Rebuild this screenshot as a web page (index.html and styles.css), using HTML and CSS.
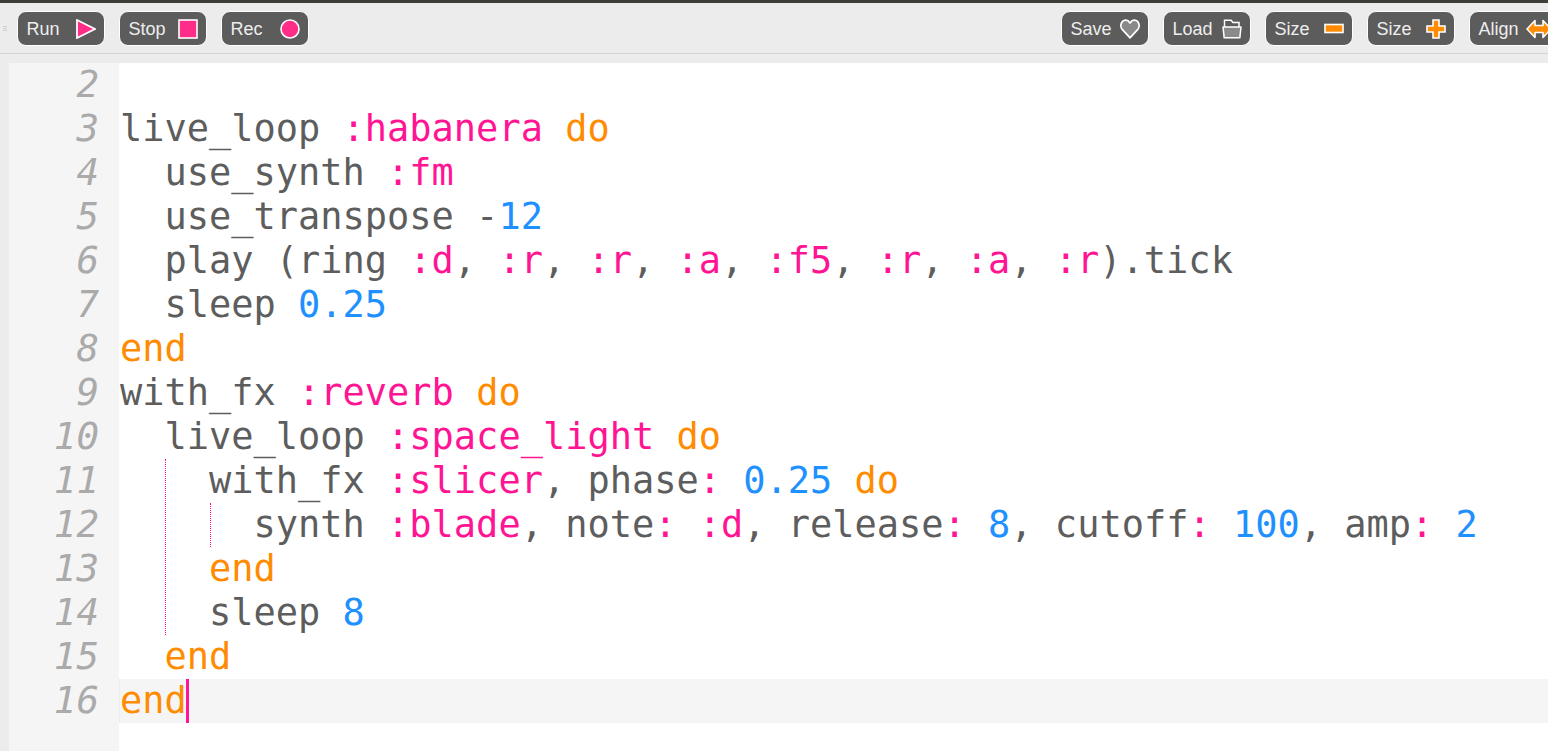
FILE: index.html
```html
<!DOCTYPE html>
<html lang="en">
<head>
<meta charset="utf-8">
<title>Sonic Pi editor</title>
<link rel="stylesheet" href="styles.css">
</head>
<body>
<div class="topline"></div>
<header class="toolbar">
  <div class="grip"><i></i><i></i><i></i></div>
  <div class="group">
    <button class="btn"><span>Run</span><svg class="ico" viewBox="0 0 20 20"><path d="M1 1 L19 10 L1 19 Z" fill="#ff2d87" stroke="#fff" stroke-width="1.8"/></svg></button>
    <button class="btn"><span>Stop</span><svg class="ico" viewBox="0 0 20 20"><rect x="1" y="1" width="18" height="18" fill="#ff2d87" stroke="#fff" stroke-width="1.6"/></svg></button>
    <button class="btn"><span>Rec</span><svg class="ico" viewBox="0 0 20 20"><circle cx="10" cy="10" r="9" fill="#ff2d87" stroke="#fff" stroke-width="1.6"/></svg></button>
  </div>
  <div class="group right">
    <button class="btn"><span>Save</span><svg class="ico" viewBox="0 0 20 20"><path d="M10 18.8 L2.2 10.4 C-0.4 7 1 1.6 5.4 1.2 C7.6 1 9 2.4 10 4 C11 2.4 12.4 1 14.6 1.2 C19 1.6 20.4 7 17.8 10.4 Z" fill="#8a8a8a" stroke="#fff" stroke-width="1.7" stroke-linejoin="round"/></svg></button>
    <button class="btn"><span>Load</span><svg class="ico" viewBox="0 0 20 20"><path d="M2.5 8 V1.2 H9 L11 3.6 H17 V8" fill="#5c5c5c" stroke="#fff" stroke-width="1.5"/><path d="M1 8 H19 L17.8 18.8 H2.2 Z" fill="#8a8a8a" stroke="#fff" stroke-width="1.5" stroke-linejoin="round"/></svg></button>
    <button class="btn"><span>Size</span><svg class="ico" viewBox="0 0 20 20"><rect x="1" y="5.5" width="18" height="8" fill="#ff8c00" stroke="#fff" stroke-width="1.6"/></svg></button>
    <button class="btn"><span>Size</span><svg class="ico" viewBox="0 0 20 20"><path d="M7 1 H13 V7 H19 V13 H13 V19 H7 V13 H1 V7 H7 Z" fill="#ff8c00" stroke="#fff" stroke-width="1.6"/></svg></button>
    <button class="btn"><span>Align</span><svg class="ico wide" viewBox="0 0 26 20"><path d="M1 10 L9 1.5 V6.5 H17 V1.5 L25 10 L17 18.5 V13.5 H9 V18.5 Z" fill="#ff8c00" stroke="#fff" stroke-width="1.6" stroke-linejoin="round"/></svg></button>
  </div>
</header>
<main class="editor">
  <div class="line"><span class="num">2</span><code class="code"></code></div>
  <div class="line"><span class="num">3</span><code class="code">live_loop <b class="sym">:habanera</b> <b class="kw">do</b></code></div>
  <div class="line"><span class="num">4</span><code class="code">  use_synth <b class="sym">:fm</b></code></div>
  <div class="line"><span class="num">5</span><code class="code">  use_transpose -<b class="n">12</b></code></div>
  <div class="line"><span class="num">6</span><code class="code">  play (ring <b class="sym">:d</b>, <b class="sym">:r</b>, <b class="sym">:r</b>, <b class="sym">:a</b>, <b class="sym">:f5</b>, <b class="sym">:r</b>, <b class="sym">:a</b>, <b class="sym">:r</b>).tick</code></div>
  <div class="line"><span class="num">7</span><code class="code">  sleep <b class="n">0.25</b></code></div>
  <div class="line"><span class="num">8</span><code class="code"><b class="kw">end</b></code></div>
  <div class="line"><span class="num">9</span><code class="code">with_fx <b class="sym">:reverb</b> <b class="kw">do</b></code></div>
  <div class="line"><span class="num">10</span><code class="code">  live_loop <b class="sym">:space_light</b> <b class="kw">do</b></code></div>
  <div class="line"><span class="num">11</span><code class="code">    with_fx <b class="sym">:slicer</b>, phase<b class="sym">:</b> <b class="n">0.25</b> <b class="kw">do</b></code></div>
  <div class="line"><span class="num">12</span><code class="code">      synth <b class="sym">:blade</b>, note<b class="sym">:</b> <b class="sym">:d</b>, release<b class="sym">:</b> <b class="n">8</b>, cutoff<b class="sym">:</b> <b class="n">100</b>, amp<b class="sym">:</b> <b class="n">2</b></code></div>
  <div class="line"><span class="num">13</span><code class="code">    <b class="kw">end</b></code></div>
  <div class="line"><span class="num">14</span><code class="code">    sleep <b class="n">8</b></code></div>
  <div class="line"><span class="num">15</span><code class="code">  <b class="kw">end</b></code></div>
  <div class="line"><span class="num">16</span><code class="code active"><b class="kw">end</b><span class="caret"></span></code></div>
  <div class="guide guide-outer"></div>
  <div class="guide guide-inner"></div>
  <div class="rest"><span class="num"></span></div>
</main>
</body>
</html>
```
FILE: styles.css
```css
* { box-sizing: border-box; }
html, body { margin: 0; height: 100%; overflow: hidden; background: #ececec; }
body { display: flex; flex-direction: column; }
.topline { height: 3px; background: #3f3d38; flex: none; }
.toolbar {
  flex: none;
  height: 51px;
  display: flex;
  align-items: center;
  padding: 1px 0 0 3px;
  background: #ececec;
  border-bottom: 1px solid #d4d4d4;
}
.grip { display: flex; flex-direction: column; gap: 1px; width: 4px; margin-right: 10px; }
.grip i { display: block; height: 1px; background: #cfcfcf; }
.group { display: flex; gap: 14px; flex: none; }
.right { margin-left: auto; margin-right: -9px; }
.btn {
  width: 88px;
  height: 35px;
  flex: none;
  display: flex;
  align-items: center;
  justify-content: space-between;
  padding: 1px 8px 0 8.5px;
  border: 1.5px solid #fff;
  border-radius: 9px;
  background: #5c5c5c;
  color: #eee;
  font: 18px "Liberation Sans", Arial, sans-serif;
}
.ico { width: 20px; height: 20px; flex: none; display: block; margin-top: -1px; }
.ico.wide { width: 26px; margin-right: -3.5px; }
.editor {
  position: relative;
  flex: 1;
  margin-top: 9px;
  padding-left: 9px;
  background: #ececec;
  display: flex;
  flex-direction: column;
}
.line { display: flex; height: 44px; flex: none; }
.num {
  flex: none;
  width: 110px;
  height: 100%;
  padding-right: 20px;
  background: #f5f5f5;
  color: #aaa;
  text-align: right;
  font: italic 37.5px/42px "DejaVu Sans Mono", monospace;
}
.code {
  flex: 1;
  position: relative;
  display: block;
  background: #fff;
  padding-left: 1px;
  color: #5d5d5d;
  white-space: pre;
  font: 36.98px/44px "DejaVu Sans Mono", monospace;
}
.code b { font-weight: normal; }
.sym { color: #ff1493; }
.kw { color: #ff8c00; }
.n { color: #1e90ff; }
.active { background: #f5f5f5; margin-left: 1px; padding-left: 0; }
.caret {
  position: absolute;
  top: 0;
  width: 3px;
  height: 44px;
  margin-left: -1px;
  background: #ff1493;
}
.guide { position: absolute; width: 0; border-left: 1px dotted #ff1493; }
.guide-outer { left: 165px; top: 396px; height: 176px; }
.guide-inner { left: 210px; top: 440px; height: 44px; }
.rest { flex: 1; display: flex; background: #fff; }
.rest .num { height: auto; }
```
